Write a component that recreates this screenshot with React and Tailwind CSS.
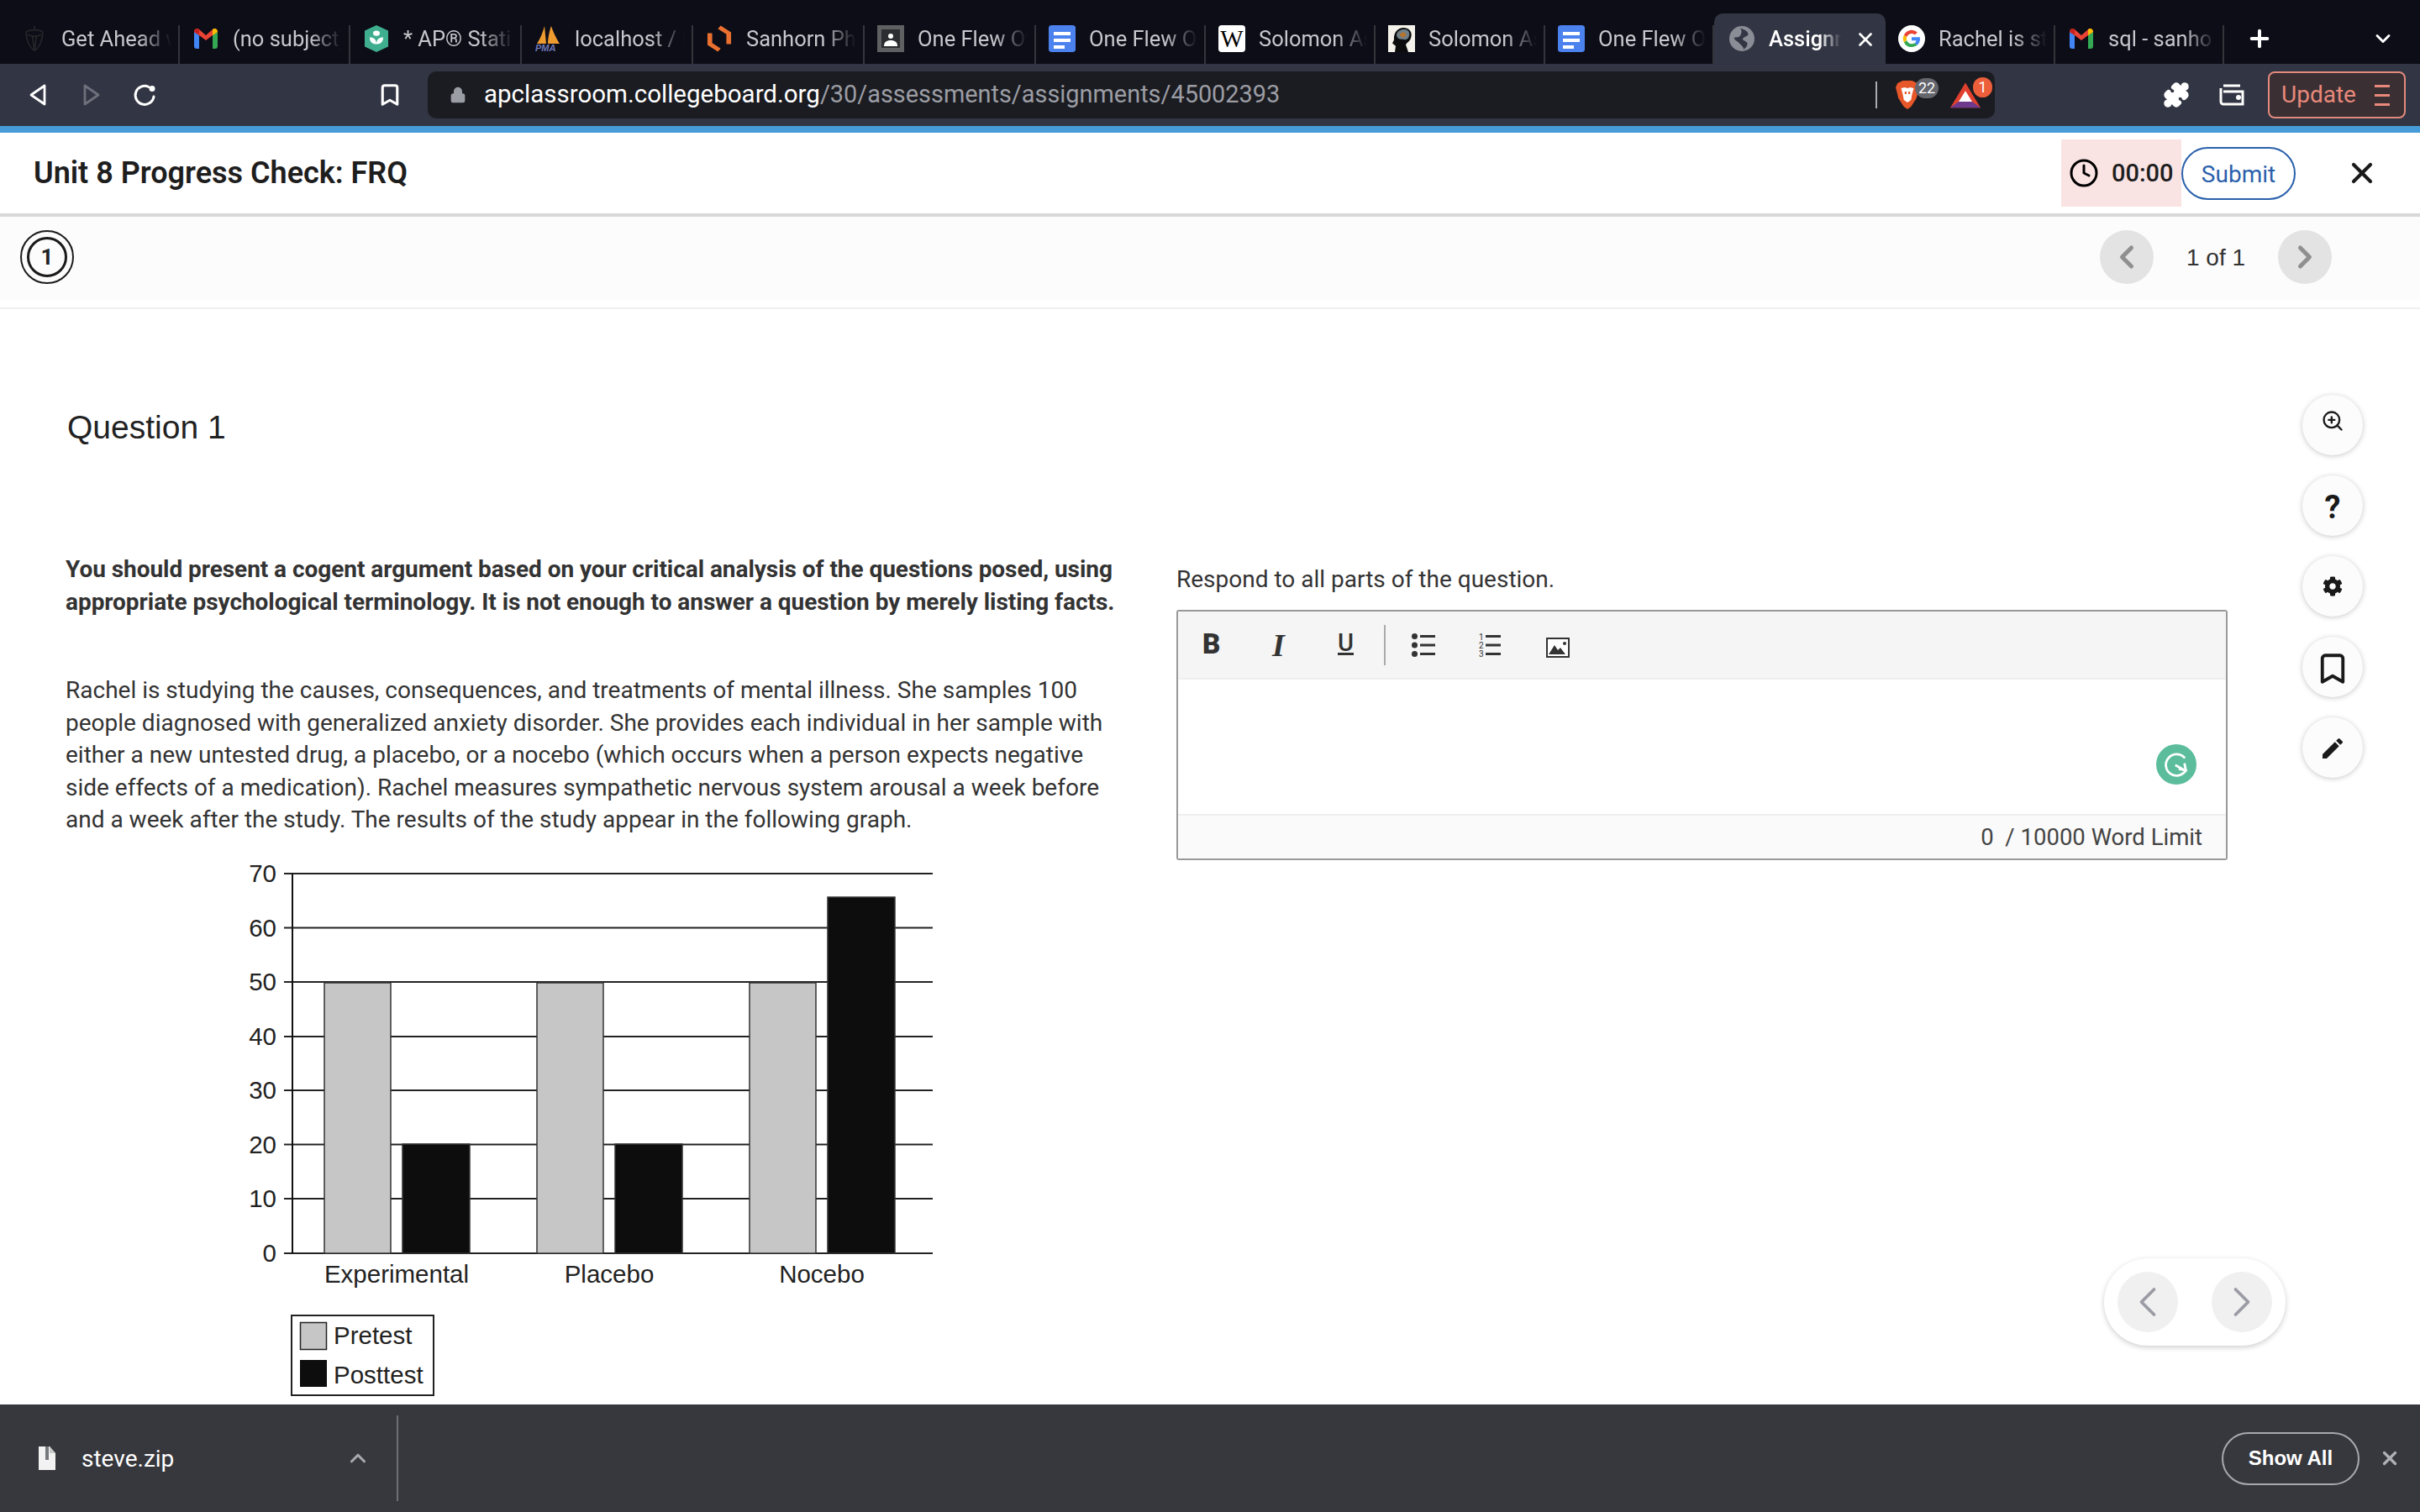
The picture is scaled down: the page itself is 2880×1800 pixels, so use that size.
import React from "react";
import { Puzzle, X, Plus, ChevronDown, ChevronUp, ChevronLeft, ChevronRight, Clock, ZoomIn, Bookmark, Lock } from "lucide-react";
import { FaCog } from "react-icons/fa";
import { MdEdit } from "react-icons/md";

const Docs = () => (
  <svg viewBox="0 0 32 40" className="w-[32px] h-[32px] shrink-0" preserveAspectRatio="none">
    <rect width="32" height="40" rx="4" fill="#4c82ee" />
    <rect x="6" y="10" width="20" height="5" fill="#fff" />
    <rect x="6" y="20" width="20" height="5" fill="#fff" />
    <rect x="6" y="30" width="13" height="5" fill="#fff" />
  </svg>
);
const Gmail = () => (
  <svg viewBox="0 0 32 32" className="w-[32px] h-[32px] shrink-0">
    <path d="M2 28V7l6 4v17H5a3 3 0 0 1-3-3z" fill="#4285f4" />
    <path d="M30 28V7l-6 4v17h3a3 3 0 0 0 3-3z" fill="#34a853" />
    <path d="M2 8c0-4 4-5 6-3l8 7 8-7c2-2 6-1 6 3l-6 4-8 6-8-6z" fill="#ea4335" />
    <path d="M24 5c2-2 6-1 6 3l-6 4z" fill="#fbbc04" />
    <path d="M2 8c0-4 4-5 6-3v7z" fill="#c5221f" />
  </svg>
);
const Google = () => (
  <svg viewBox="0 0 32 32" className="w-[32px] h-[32px] shrink-0">
    <circle cx="16" cy="16" r="16" fill="#fff" />
    <path d="M26 16.3c0-.8-.1-1.500-.2-2.100H16v4h5.600a4.800 4.800 0 0 1-2 3.100l3.200 2.500c1.900-1.800 3.200-4.400 3.200-7.500z" fill="#4285f4" />
    <path d="M16 26c2.700 0 5-1 6.800-2.200l-3.200-2.500c-.9.600-2.100 1-3.600 1-2.700 0-5-1.800-5.800-4.300L6.900 20.500A10 10 0 0 0 16 26z" fill="#34a853" />
    <path d="M10.200 18a6 6 0 0 1 0-4L6.900 11.500a10 10 0 0 0 0 9z" fill="#fbbc04" />
    <path d="M16 10c1.500 0 2.800.5 3.900 1.500l2.900-2.900A10 10 0 0 0 6.900 11.500l3.300 2.500C11 11.800 13.300 10 16 10z" fill="#ea4335" />
  </svg>
);
const Acorn = () => (
  <svg viewBox="0 0 32 40" className="w-[28px] h-[32px] shrink-0" fill="none" stroke="#26262a" strokeWidth="2">
    <path d="M16 1v6M4 10c4-4 20-4 24 0 1 8-3 22-12 28C7 32 3 18 4 10zM6 14c6 3 14 3 20 0M13 16l3 22 3-22" />
  </svg>
);
const Khan = () => (
  <svg viewBox="0 0 28 40" className="w-[28px] h-[32px] shrink-0" preserveAspectRatio="none">
    <path d="M14 0l14 8v24l-14 8-14-8V8z" fill="#3fae8f" />
    <circle cx="14" cy="12" r="4" fill="#fff" />
    <path d="M6 18c5 0 8 3 8 10-5 0-8-3-8-10zM22 18c-5 0-8 3-8 10 5 0 8-3 8-10z" fill="#fff" />
  </svg>
);
const Pma = () => (
  <svg viewBox="0 0 32 32" className="w-[32px] h-[32px] shrink-0">
    <path d="M3 22C7 16 10 8 12 1l2 21zM16 22c0-6 2-16 4-21 2 6 6 15 10 21z" fill="#ed9a2f" />
    <text x="1" y="31" fontSize="11" fontStyle="italic" fontWeight="700" fill="#6d78b8" fontFamily="'Liberation Sans', sans-serif">PMA</text>
  </svg>
);
const Sanhorn = () => (
  <svg viewBox="0 0 32 40" className="w-[30px] h-[32px] shrink-0" fill="none" stroke="#ea7030" strokeWidth="6" preserveAspectRatio="none">
    <path d="M16 3l12 9v16M16 37L4 28V12" />
  </svg>
);
const Classroom = () => (
  <svg viewBox="0 0 32 32" className="w-[32px] h-[32px] shrink-0">
    <rect width="32" height="32" fill="#5f6062" />
    <rect x="5" y="5" width="22" height="22" fill="#2c2d30" />
    <circle cx="16" cy="13" r="3" fill="#fff" />
    <path d="M8 25c0-5 3-7 8-7s8 2 8 7z" fill="#fff" />
  </svg>
);
const Wiki = () => (
  <div className="w-[32px] h-[32px] shrink-0 rounded-[4px] bg-white flex items-center justify-center text-black text-[29px] leading-none font-['Liberation_Serif',serif]">W</div>
);
const Head = () => (
  <svg viewBox="0 0 32 40" className="w-[32px] h-[32px] shrink-0" preserveAspectRatio="none">
    <rect width="32" height="40" fill="#f4f2ea" />
    <path d="M8 40l1-9-4-4 2-5C6 8 14 3 20 4c7 1 9 9 7 15-1 5-5 7-6 10l3 11z" fill="#0c0c0c" />
    <path d="M10 14c1-6 7-9 12-7 4 2 4 8 2 12-2 3-5 3-7 2-4 0-7-2-7-7z" fill="#6d7f8a" />
    <path d="M13 13l6-3 3 5-5 4z" fill="#b5742f" />
  </svg>
);
const GlobeSolid = () => (
  <svg viewBox="0 0 32 32" className="w-[30px] h-[30px] shrink-0">
    <circle cx="16" cy="16" r="16" fill="#8a8d96" />
    <path d="M14 2c4 3 9 3 10 8 0 3-5 3-7 6 0 3 5 3 6 6 0 4-3 6-5 8 1-3-3-6-5-8-2-3-6-3-7-7 2-1 6 0 8-3 2-3 2-7 0-10z" fill="#323543" />
  </svg>
);

const tabs = [
  { w: "w-[204px]", icon: <Acorn />, text: "Get Ahead w" },
  { w: "w-[203px]", icon: <Gmail />, text: "(no subject)" },
  { w: "w-[204px]", icon: <Khan />, text: "* AP® Statis" },
  { w: "w-[204px]", icon: <Pma />, text: "localhost / lo" },
  { w: "w-[204px]", icon: <Sanhorn />, text: "Sanhorn Phi" },
  { w: "w-[204px]", icon: <Classroom />, text: "One Flew Ov" },
  { w: "w-[202px]", icon: <Docs />, text: "One Flew O" },
  { w: "w-[202px]", icon: <Wiki />, text: "Solomon As" },
  { w: "w-[202px]", icon: <Head />, text: "Solomon As" },
  { w: "w-[201px]", icon: <Docs />, text: "One Flew O" },
  { w: "w-[204px]", active: true, icon: <GlobeSolid />, text: "Assignm" },
  { w: "w-[202px]", icon: <Google />, text: "Rachel is st" },
  { w: "w-[201px]", icon: <Gmail />, text: "sql - sanho" },
];

const SideBtn = ({ children }) => (
  <button className="w-[72px] h-[72px] rounded-full bg-[#fcfcfc] shadow-[0_1px_6px_rgba(0,0,0,0.22)] flex items-center justify-center text-[#1a1a1a]">
    {children}
  </button>
);

function Chart() {
  const ys = [1492, 1427, 1362.5, 1298, 1234, 1169, 1104.5, 1040];
  const bars = [
    [386, 465, 1170, "#c6c6c6"],
    [479, 559, 1362, "#0d0d0d"],
    [639, 718, 1170, "#c6c6c6"],
    [732, 812, 1362, "#0d0d0d"],
    [892, 971, 1170, "#c6c6c6"],
    [985, 1065, 1068, "#0d0d0d"],
  ];
  return (
    <svg viewBox="270 1020 860 650" className="block w-[860px] h-[650px] ml-[192px] mt-[24px]" style={{ fontFamily: "'Liberation Sans', sans-serif" }}>
      {ys.map((y, i) => (
        <g key={y}>
          <line x1="338" x2="1110" y1={y} y2={y} stroke="#222" strokeWidth="2" />
          <text x="329" y={y + 10} textAnchor="end" fontSize="29.500" fill="#222">{i * 10}</text>
        </g>
      ))}
      <line x1="348" x2="348" y1="1040" y2="1492" stroke="#111" strokeWidth="2" />
      {bars.map(([a, b, t, c]) => (
        <rect key={a} x={a} y={t} width={b - a} height={1492 - t} fill={c} stroke="#333" strokeWidth="1.500" />
      ))}
      <text x="472" y="1527" textAnchor="middle" fontSize="29.500" fill="#222">Experimental</text>
      <text x="725" y="1527" textAnchor="middle" fontSize="29.500" fill="#222">Placebo</text>
      <text x="978" y="1527" textAnchor="middle" fontSize="29.500" fill="#222">Nocebo</text>
      <rect x="347" y="1566" width="169" height="95" fill="#fff" stroke="#222" strokeWidth="2" />
      <rect x="357.500" y="1574.500" width="31" height="32" fill="#c6c6c6" stroke="#222" strokeWidth="1.500" />
      <rect x="357" y="1619" width="32" height="32" fill="#0d0d0d" />
      <text x="397" y="1600" fontSize="29.500" fill="#222">Pretest</text>
      <text x="397" y="1647" fontSize="29.500" fill="#222">Posttest</text>
    </svg>
  );
}

export default function App() {
  return (
    <div className="relative w-[2880px] h-[1800px] overflow-hidden bg-white flex flex-col font-['Roboto',sans-serif]">
      {/* tab strip */}
      <div className="h-[76px] bg-[#0c0d17] flex items-end pl-[10px] shrink-0">
        <div className="w-[2637px] flex items-end">
          {tabs.map((t, i) => (
            <div
              key={i}
              className={
                t.w + " " +
                (t.active
                  ? "shrink-0 h-[60px] bg-[#323543] rounded-t-[10px] flex items-start pt-[14px] pl-[17px] pr-[11px] gap-[16px] relative"
                  : "shrink-0 h-[46px] border-r-2 border-[#34353b] flex items-start pl-[15px] pr-[8px] gap-[16px]")
              }
            >
              <div className="w-[32px] h-[32px] shrink-0 flex items-center justify-center">{t.icon}</div>
              <span
                className={
                  (t.active ? "text-white font-medium " : "text-[#c6c8cd] ") +
                  "flex-1 min-w-0 overflow-hidden whitespace-nowrap text-[25.500px] leading-[32px] [mask-image:linear-gradient(to_right,black_70%,transparent)]"
                }
              >
                {t.text}
              </span>
              {t.active && <X className="w-[26px] h-[30px] text-white shrink-0 mt-[2px]" strokeWidth={2.500} />}
            </div>
          ))}
        </div>
        <div className="flex items-center self-stretch flex-1 pl-[26px] pt-[16px]">
          <Plus className="w-[32px] h-[32px] text-white" strokeWidth={3} />
          <ChevronDown className="w-[28px] h-[28px] text-white ml-[117px]" strokeWidth={2.500} />
        </div>
      </div>

      {/* toolbar */}
      <div className="h-[74px] bg-[#323543] flex items-center shrink-0">
        <svg viewBox="0 0 20 26" className="w-[20px] h-[26px] ml-[35px]" fill="none" stroke="#fff" strokeWidth="2.800" strokeLinejoin="round">
          <path d="M18 2L2 13l16 11z" />
        </svg>
        <svg viewBox="0 0 20 26" className="w-[20px] h-[26px] ml-[44px]" fill="none" stroke="#6e707b" strokeWidth="2.800" strokeLinejoin="round">
          <path d="M2 2l16 11L2 24z" />
        </svg>
        <svg viewBox="0 0 28 28" className="w-[28px] h-[28px] ml-[39px]" fill="none" stroke="#fff" strokeWidth="3" strokeLinecap="round">
          <path d="M19 4.500A11 11 0 1 0 25 16" />
          <circle cx="23" cy="6.500" r="3.500" fill="#fff" stroke="none" />
        </svg>
        <Bookmark className="w-[30px] h-[34px] text-white ml-[263px]" strokeWidth={2.500} />
        <div className="w-[1865px] h-[56px] ml-[30px] bg-[#1b1c21] rounded-[10px] flex items-center pl-[26px]">
          <Lock className="w-[20px] h-[24px] text-[#9b9da4] fill-[#9b9da4]" />
          <div className="ml-[21px] leading-none whitespace-nowrap">
            <span className="text-white text-[29.500px]">apclassroom.collegeboard.org</span>
            <span className="text-[#9b9da4] text-[28.900px]">/30/assessments/assignments/45002393</span>
          </div>
          <div className="w-[2px] h-[32px] bg-[#a9abb1] ml-auto" />
          <div className="relative w-[30px] h-[36px] ml-[21px]">
            <svg viewBox="0 0 28 36" className="w-[30px] h-[36px]" preserveAspectRatio="none">
              <path d="M3 4l6-3h10l6 3 2 5-3 13-6 10-4 3-4-3-6-10L1 9z" fill="#e7572a" />
              <path d="M7 10l4-1 3 1 3-1 4 1-2 8-1 6-4 3-4-3-1-6z" fill="#fff" />
              <path d="M11 14h2v3h-2zM15 14h2v3h-2z" fill="#e7572a" />
            </svg>
            <span className="absolute left-[24px] -top-[2px] w-[28px] h-[24px] rounded-full bg-[#64656d] text-white text-[18px] leading-[24px] text-center">22</span>
          </div>
          <div className="relative w-[36px] h-[32px] ml-[36px]">
            <svg viewBox="0 0 36 40" className="w-[36px] h-[32px]" preserveAspectRatio="none">
              <path d="M18 2l18 37H0z" fill="#e2402f" />
              <path d="M18 14l8 16H10z" fill="#fff" />
              <path d="M0 39l10-9h16l10 9z" fill="#6d3a8e" />
            </svg>
            <span className="absolute left-[27px] -top-[5px] w-[23px] h-[24px] rounded-full bg-[#ec5f3a] text-white text-[18px] leading-[24px] text-center">1</span>
          </div>
          <div className="w-[17px]" />
        </div>
        <Puzzle className="w-[32px] h-[32px] text-white fill-white ml-[200px]" />
        <svg viewBox="0 0 32 26" className="w-[32px] h-[26px] ml-[35px]" fill="none" stroke="#fff" strokeWidth="3">
          <path d="M5 2h20M2 5v16a3 3 0 0 0 3 3h23V9H5" />
          <circle cx="23" cy="16" r="1.500" fill="#fff" />
        </svg>
        <div className="w-[164px] h-[56px] ml-[26px] rounded-[8px] border-2 border-[#e18a7d] bg-[#3a2f33] flex items-center pl-[14px] pr-[17px] justify-between">
          <span className="text-[#e8897b] text-[28px] leading-none">Update</span>
          <div className="flex flex-col gap-[8px]">
            <div className="w-[18px] h-[3px] bg-[#e8897b]" />
            <div className="w-[18px] h-[3px] bg-[#e8897b]" />
            <div className="w-[18px] h-[3px] bg-[#e8897b]" />
          </div>
        </div>
      </div>
      <div className="h-[8px] bg-[#469cd9] shrink-0" />

      {/* page header */}
      <div className="h-[100px] border-b-4 border-[#d8d8d8] flex items-center pl-[40px] shrink-0">
        <h1 className="text-[36px] font-semibold leading-none text-[#1e1e1e]">Unit 8 Progress Check: FRQ</h1>
        <div className="ml-auto flex items-center self-start mt-[8px] h-[80px] w-[143px] bg-[#fae3e3] pl-[9px]">
          <Clock className="w-[36px] h-[36px] text-black" strokeWidth={2} />
          <span className="ml-[15px] text-[29px] font-medium text-[#1e1e1e] leading-none">00:00</span>
        </div>
        <button className="w-[136px] h-[63px] rounded-full border-2 border-[#2a60ab] text-[#2a60ab] text-[28px] leading-none flex items-center justify-center pt-[3px]">Submit</button>
        <X className="w-[40px] h-[40px] text-[#1a1a1a] ml-[59px] mr-[49px]" strokeWidth={2.500} />
      </div>

      {/* question nav */}
      <div className="h-[110px] shrink-0 border-b-2 border-[#f0f0f0]">
        <div className="h-[99px] bg-[#fcfcfc] flex items-center pl-[24px] pb-[3px]">
          <div className="w-[64px] h-[64px] rounded-full border-2 border-[#1a1a1a] flex items-center justify-center">
            <div className="w-[48px] h-[48px] rounded-full border-[3px] border-[#1a1a1a] flex items-center justify-center text-[26px] font-bold text-[#222] leading-none">1</div>
          </div>
          <div className="ml-auto flex items-center mr-[105px]">
            <div className="w-[64px] h-[64px] rounded-full bg-[#e3e3e3] flex items-center justify-center">
              <ChevronLeft className="w-[44px] h-[44px] text-[#8f8f8f]" strokeWidth={2.700} />
            </div>
            <span className="w-[148px] text-center text-[28px] text-[#333] leading-none font-['Liberation_Sans',sans-serif] pt-[2px]">1 of 1</span>
            <div className="w-[64px] h-[64px] rounded-full bg-[#e3e3e3] flex items-center justify-center">
              <ChevronRight className="w-[44px] h-[44px] text-[#8f8f8f]" strokeWidth={2.700} />
            </div>
          </div>
        </div>
      </div>

      {/* main */}
      <div className="flex-1 min-h-0 relative">
        <h2 className="ml-[80px] mt-[118px] text-[39px] leading-[46px] text-[#222] font-['Liberation_Sans',sans-serif]">Question 1</h2>
        <div className="flex mt-[127px] pl-[78px]">
          <div className="w-[1262px] shrink-0 text-[28px] leading-[38.500px] text-[#333]">
            <p className="font-bold tracking-[-0.05px]">You should present a cogent argument based on your critical analysis of the questions posed, using appropriate psychological terminology. It is not enough to answer a question by merely listing facts.</p>
            <p className="mt-[67px]">Rachel is studying the causes, consequences, and treatments of mental illness. She samples 100 people diagnosed with generalized anxiety disorder. She provides each individual in her sample with either a new untested drug, a placebo, or a nocebo (which occurs when a person expects negative side effects of a medication). Rachel measures sympathetic nervous system arousal a week before and a week after the study. The results of the study appear in the following graph.</p>
            <Chart />
          </div>
          <div className="ml-[60px] w-[1251px] shrink-0 pt-[12px]">
            <p className="text-[28px] leading-[38px] text-[#333]">Respond to all parts of the question.</p>
            <div className="mt-[17px] h-[298px] border-2 border-[#999] rounded-[3px] flex flex-col">
              <div className="h-[81px] bg-[#f5f5f5] border-b-2 border-[#eee] flex items-center relative text-[#333]">
                <span className="absolute left-[29px] top-[21px] font-black text-[33px] leading-[36px]">B</span>
                <span className="absolute left-[112px] top-[22px] font-['Liberation_Serif',serif] italic font-bold text-[38px] leading-[36px]">I</span>
                <span className="absolute left-[190px] top-[25px] border-b-[3px] border-[#333] text-[29px] leading-[24px] font-medium">U</span>
                <div className="absolute left-[245px] top-[16px] w-[2px] h-[48px] bg-[#aaa]" />
                <svg viewBox="0 0 28 28" className="absolute left-[278px] top-[26px] w-[28px] h-[28px]" fill="#333">
                  <circle cx="3.500" cy="3.500" r="3.500" />
                  <circle cx="3.500" cy="14" r="3.500" />
                  <circle cx="3.500" cy="24.500" r="3.500" />
                  <rect x="10" y="2" width="18" height="3" />
                  <rect x="10" y="12.500" width="18" height="3" />
                  <rect x="10" y="23" width="18" height="3" />
                </svg>
                <svg viewBox="0 0 28 28" className="absolute left-[358px] top-[26px] w-[28px] h-[28px]" fill="#333">
                  <text x="0" y="8" fontSize="10">1</text>
                  <text x="0" y="18" fontSize="10">2</text>
                  <text x="0" y="28" fontSize="10">3</text>
                  <rect x="8" y="2" width="18" height="3" />
                  <rect x="8" y="12.500" width="18" height="3" />
                  <rect x="8" y="23" width="18" height="3" />
                </svg>
                <svg viewBox="0 0 28 24" className="absolute left-[438px] top-[31px] w-[28px] h-[24px]">
                  <rect x="1" y="1" width="26" height="22" fill="#fff" stroke="#333" strokeWidth="2" />
                  <path d="M3 20l7-11 4 6 3-3 6 8z" fill="#333" />
                  <circle cx="22" cy="7" r="2" fill="#333" />
                </svg>
              </div>
              <div className="flex-1 bg-white relative">
                <div className="absolute right-[35px] top-[77px] w-[48px] h-[48px] rounded-full bg-[#5bbd9b] flex items-center justify-center">
                  <svg viewBox="0 0 24 24" className="w-[34px] h-[34px]" fill="none" stroke="#fff" strokeWidth="2" strokeLinecap="square">
                    <path d="M18.500 6A9 9 0 1 0 20 17M20 17l-1-5M20 17l-5-1M12 13l7 4" />
                  </svg>
                </div>
              </div>
              <div className="h-[53px] bg-[#fafafa] border-t-2 border-[#eee] flex items-center justify-end pr-[28px] text-[27.500px] text-[#444] leading-none">0 &nbsp;/ 10000 Word Limit</div>
            </div>
          </div>
        </div>

        {/* side tools */}
        <div className="absolute left-[2740px] top-[102px] flex flex-col gap-[24px]">
          <SideBtn><ZoomIn className="w-[28px] h-[28px] mb-[10px]" strokeWidth={2} /></SideBtn>
          <SideBtn><span className="text-[38px] font-bold leading-none pt-[4px]">?</span></SideBtn>
          <SideBtn><FaCog className="w-[24px] h-[24px]" /></SideBtn>
          <SideBtn><Bookmark className="w-[42px] h-[42px] mt-[4px]" strokeWidth={2.200} /></SideBtn>
          <SideBtn><MdEdit className="w-[32px] h-[32px] mt-[2px]" /></SideBtn>
        </div>

        {/* bottom pager */}
        <div className="absolute left-[2504px] top-[1130px] w-[216px] h-[104px] rounded-full bg-white shadow-[0_2px_6px_rgba(0,0,0,0.2)] flex items-center justify-between px-[16px]">
          <div className="w-[72px] h-[72px] rounded-full bg-[#f0f0f0] flex items-center justify-center">
            <ChevronLeft className="w-[60px] h-[60px] text-[#9b9ba5]" strokeWidth={1.500} />
          </div>
          <div className="w-[72px] h-[72px] rounded-full bg-[#f0f0f0] flex items-center justify-center">
            <ChevronRight className="w-[60px] h-[60px] text-[#9b9ba5]" strokeWidth={1.500} />
          </div>
        </div>
      </div>

      {/* download shelf */}
      <div className="absolute left-0 bottom-0 w-full h-[128px] bg-[#37383d] flex items-center">
        <svg viewBox="0 0 22 30" className="w-[22px] h-[30px] ml-[45px]">
          <path d="M1 1h13l7 8v20H1z" fill="#f2f2f2" />
          <path d="M14 1l7 8h-7z" fill="#c8c8c8" />
          <rect x="9" y="1" width="4" height="16" fill="#77787c" />
        </svg>
        <span className="ml-[30px] text-[28px] text-white leading-none mt-[2px]">steve.zip</span>
        <ChevronUp className="w-[30px] h-[30px] text-[#a8a9ad] ml-[204px]" strokeWidth={2.500} />
        <div className="w-[2px] h-[102px] bg-[#6e6f73] ml-[31px]" />
        <button className="ml-auto w-[164px] h-[63px] rounded-full border-2 border-[#a8a9ad] text-white text-[24px] font-semibold leading-none font-['Liberation_Sans',sans-serif]">Show All</button>
        <X className="w-[26px] h-[26px] text-[#b0b1b4] ml-[23px] mr-[23px]" strokeWidth={3} />
      </div>
    </div>
  );
}
